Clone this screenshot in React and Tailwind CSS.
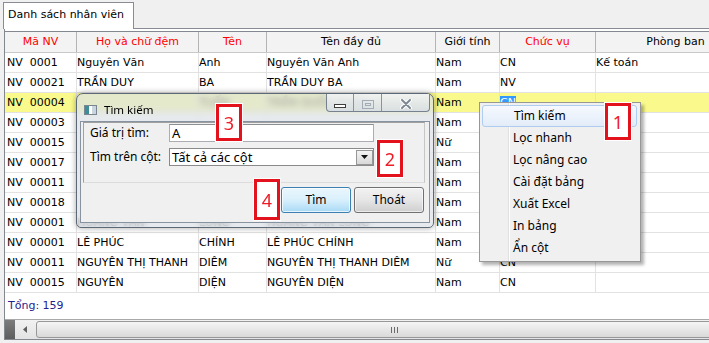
import React from 'react'

const dv = "font-['DejaVu_Sans',sans-serif]"
const ui = "font-['Noto_Sans',sans-serif]"

const cols = [
  { w: 'w-[72px]', pad: 'pl-[2px]', label: 'Mã NV', red: true },
  { w: 'w-[122px]', pad: 'pl-0', label: 'Họ và chữ đệm', red: true },
  { w: 'w-[68px]', pad: 'pl-0', label: 'Tên', red: true },
  { w: 'w-[169px]', pad: 'pl-0', label: 'Tên đầy đủ' },
  { w: 'w-[64px]', pad: 'pl-0', label: 'Giới tính' },
  { w: 'w-[96px]', pad: 'pl-0', label: 'Chức vụ', red: true },
  { w: 'w-[160px]', pad: 'pl-0', label: 'Phòng ban' },
]

// cells hidden behind the search dialog and the context menu stay empty
const rows = [
  ['NV  0001', 'Nguyên Văn', 'Anh', 'Nguyên Văn Anh', 'Nam', 'CN', 'Kế toán'],
  ['NV  00021', 'TRẦN DUY', 'BA', 'TRẦN DUY BA', 'Nam', 'NV', ''],
  ['NV  00004', '', 'TUẤN', 'TRẦN QUỐC TUẤN', 'Nam', 'CN', ''],
  ['NV  00003', '', '', '', 'Nam', '', ''],
  ['NV  00015', '', '', '', 'Nữ', '', ''],
  ['NV  00017', '', '', '', 'Nam', '', ''],
  ['NV  00011', '', '', '', 'Nam', '', ''],
  ['NV  00018', '', '', '', 'Nam', '', ''],
  ['NV  00001', 'HOÀNG VĂN', 'LONG', 'HOÀNG VĂN LONG', 'Nam', '', ''],
  ['NV  00001', 'LÊ PHÚC', 'CHÍNH', 'LÊ PHÚC CHÍNH', 'Nam', '', ''],
  ['NV  00011', 'NGUYÊN THỊ THANH', 'DIÊM', 'NGUYÊN THỊ THANH DIÊM', 'Nữ', 'CN', ''],
  ['NV  00015', 'NGUYÊN', 'DIỆN', 'NGUYÊN DIỆN', 'Nam', 'CN', ''],
]

const menuItems = ['Tìm kiếm', 'Lọc nhanh', 'Lọc nâng cao', 'Cài đặt bảng', 'Xuất Excel', 'In bảng', 'Ẩn cột']

function Marker({ n, className }) {
  return (
    <div
      className={`absolute flex items-center justify-center border-[3px] border-[#e3121c] bg-white shadow-[0_0_0_1px_white] ${ui} text-[18px] leading-none text-[#ee1c25] ${className}`}
    >
      {n}
    </div>
  )
}

function Grid() {
  return (
    <div className={`${dv} text-[11px] text-black`}>
      <div className="flex h-[22px] border-y border-t-[#828790] border-b-[#c9c9c9] bg-[#f3f3f3]">
        {cols.map((c) => (
          <div
            key={c.label}
            className={`${c.w} shrink-0 border-r border-[#b4b4b4] text-center leading-[20px] ${c.red ? 'text-[#ff0000]' : 'text-black'}`}
          >
            {c.label}
          </div>
        ))}
      </div>
      {rows.map((r, i) => (
        <div
          key={i}
          className={`flex h-[20px] border-b border-[#e2e2e2] ${i === 2 ? 'bg-[#fafa8c]' : 'bg-white'}`}
        >
          {r.map((v, j) => (
            <div
              key={j}
              className={`${cols[j].w} ${cols[j].pad} shrink-0 overflow-hidden whitespace-pre border-r border-[#e2e2e2] leading-[19px]`}
            >
              {i === 2 && j === 5 ? <span className="bg-[#3399ff] text-white">{v}</span> : v}
            </div>
          ))}
        </div>
      ))}
      <div className="flex h-[26px] items-center bg-white pl-[3px] text-[#23238f]">Tổng: 159</div>
      <div className="flex h-[20px] border-t border-[#a9a9a9] bg-gradient-to-b from-[#f2f2f2] to-[#e3e3e3]">
        <div className="w-[10px] shrink-0 bg-gradient-to-b from-[#7c7c7c] to-[#5f5f5f]" />
        <div className="flex w-[20px] shrink-0 items-center justify-center">
          <svg width="4" height="7" viewBox="0 0 4 7">
            <path d="M4 0 L0 3.5 L4 7 Z" fill="#606060" />
          </svg>
        </div>
        <div className="ml-[1px] mt-[1px] flex h-[17px] w-[716px] shrink-0 items-center justify-center rounded-[3px] border border-[#979797] bg-gradient-to-b from-[#f5f5f5] to-[#d9d9d9]">
          <svg width="7" height="6" viewBox="0 0 7 6">
            <path d="M0.5 0v6M3.5 0v6M6.5 0v6" stroke="#6a6a6a" strokeWidth="1" />
          </svg>
        </div>
      </div>
    </div>
  )
}

function Dialog() {
  return (
    <div className="absolute left-[76px] top-[93px] flex h-[135px] w-[358px] flex-col rounded-t-[7px] rounded-b-[5px] border border-[#5c6875] bg-[#dbe1e7]/70 shadow-[0_0_6px_rgba(0,0,0,0.35)] backdrop-blur-[3px]">
      <div className="flex h-[27px] shrink-0 items-start">
        <div className={`flex h-full items-center gap-[7px] pl-[7px] pt-[4px] ${ui} text-[11.5px] text-black`}>
          <svg width="13" height="10" viewBox="0 0 13 10">
            <rect x="0.5" y="0.5" width="12" height="9" fill="#eef2f5" stroke="#7a8691" />
            <rect x="1" y="1" width="4" height="8" fill="#3f8d96" />
            <rect x="5" y="1" width="3" height="8" fill="#ffffff" />
            <rect x="8" y="1" width="4" height="8" fill="#c9d6e0" />
          </svg>
          <span className="leading-[14px]">Tìm kiếm</span>
        </div>
        <div className="ml-auto mr-[3px] flex h-[18px] overflow-hidden rounded-b-[4px] border border-t-0 border-[#76828f] bg-gradient-to-b from-[#f3f5f8]/80 to-[#d6dde5]/80">
          <div className="flex w-[27px] justify-center border-r border-[#8893a0] pt-[10px]">
            <svg width="12" height="4" viewBox="0 0 12 4">
              <rect x="0.5" y="0.5" width="11" height="3" fill="#ffffff" stroke="#3d3d3d" />
            </svg>
          </div>
          <div className="flex w-[28px] justify-center border-r border-[#8893a0] pt-[6px]">
            <svg width="12" height="9" viewBox="0 0 12 9">
              <rect x="0.5" y="0.5" width="11" height="8" fill="none" stroke="#a3acb6" />
              <rect x="3.5" y="3.5" width="5" height="2" fill="none" stroke="#a3acb6" />
            </svg>
          </div>
          <div className="flex w-[47px] justify-center pt-[5px]">
            <svg width="12" height="10" viewBox="0 0 12 10">
              <path d="M2 1 L10 9 M10 1 L2 9" stroke="#ffffff" strokeWidth="4" strokeLinecap="round" />
              <path d="M2 1 L10 9 M10 1 L2 9" stroke="#7f8994" strokeWidth="2" strokeLinecap="round" />
            </svg>
          </div>
        </div>
      </div>
      <div className={`mx-[3px] flex h-[102px] shrink-0 flex-col border border-[#8793a0] bg-[#f0f0f0] ${ui} text-[12px] text-black`}>
        <div className="ml-[2px] mr-[4px] flex h-[61px] shrink-0 flex-col border border-l-[#a0a0a0] border-t-[#a0a0a0] border-r-[#c6c6c6] border-b-[#dcdcdc] pl-[6px] pt-[1px]">
          <div className="flex h-[18px] items-center">
            <span className="w-[79px] leading-[16px]">Giá trị tìm:</span>
            <div className="flex h-[18px] w-[205px] items-center border border-[#abadb3] border-t-[#8e8f93] bg-white pl-[2px] text-[13px] leading-[16px]">
              A
            </div>
          </div>
          <div className="mt-[6px] flex h-[18px] items-center">
            <span className="w-[79px] leading-[16px]">Tìm trên cột:</span>
            <div className="flex h-[18px] w-[205px] items-center border border-[#8a8a8a] bg-white pl-[2px] text-[13px] leading-[16px]">
              <span className="flex-1">Tất cả các cột</span>
              <div className="flex h-[15px] w-[17px] items-center justify-center border border-[#979797] bg-gradient-to-b from-[#f4f4f4] to-[#d8d8d8]">
                <svg width="7" height="4" viewBox="0 0 7 4">
                  <path d="M0 0 H7 L3.5 4 Z" fill="#111" />
                </svg>
              </div>
            </div>
          </div>
        </div>
        <div className="mt-[4px] flex justify-end gap-[3px] pr-[5px]">
          <div className="flex h-[26px] w-[70px] items-center justify-center rounded-[3px] border border-[#3c7fb1] bg-gradient-to-b from-[#eaf6fd] via-[#d9f0fc] to-[#a7d9f5] shadow-[inset_0_0_0_1px_rgba(255,255,255,0.7)]">
            Tìm
          </div>
          <div className="flex h-[26px] w-[70px] items-center justify-center rounded-[3px] border border-[#707070] bg-gradient-to-b from-[#f2f2f2] via-[#e6e6e6] to-[#cfcfcf] shadow-[inset_0_0_0_1px_rgba(255,255,255,0.6)]">
            Thoát
          </div>
        </div>
      </div>
    </div>
  )
}

function ContextMenu() {
  return (
    <div className={`absolute left-[479px] top-[102px] h-[160px] w-[162px] border border-[#979797] bg-[#f0f0f0] shadow-[3px_3px_3px_rgba(0,0,0,0.3)] ${ui} text-[12px] text-black`}>
      <div className="absolute bottom-0 left-[28px] top-0 w-[2px] border-l border-[#e0e0e0] bg-white" />
      <div className="relative flex flex-col pl-[2px] pr-[3px] pt-[2px]">
        {menuItems.map((m, i) => (
          <div
            key={m}
            className={`flex h-[22px] items-center pl-[31px] leading-[16px] ${i === 0 ? 'rounded-[3px] border border-[#aecdf0] bg-gradient-to-b from-[#f6f9fe] to-[#e2ecf9] pl-[30px]' : ''}`}
          >
            {m}
          </div>
        ))}
      </div>
    </div>
  )
}

export default function App() {
  return (
    <div className="relative h-[343px] w-[709px] overflow-hidden bg-[#f0f0f0]">
      <div className="flex h-[29px]">
        <div className="w-[3px] shrink-0" />
        <div className={`mt-[2px] flex h-[27px] w-[131px] shrink-0 items-center border border-b-0 border-[#898c95] bg-white pb-[2px] pl-[4px] ${dv} text-[11px] text-black`}>
          Danh sách nhân viên
        </div>
        <div className="flex-1 border-b border-[#898c95]" />
      </div>
      <div className="ml-[4px] h-[311px] overflow-hidden border-b border-l border-[#828790] bg-white pt-[2px]">
        <Grid />
      </div>

      <Dialog />
      <ContextMenu />

      <Marker n="1" className="left-[605px] top-[103px] h-[37px] w-[26px]" />
      <Marker n="2" className="left-[377px] top-[140px] h-[37px] w-[26px]" />
      <Marker n="3" className="left-[216px] top-[104px] h-[37px] w-[26px]" />
      <Marker n="4" className="left-[254px] top-[179px] h-[41px] w-[26px]" />
    </div>
  )
}
